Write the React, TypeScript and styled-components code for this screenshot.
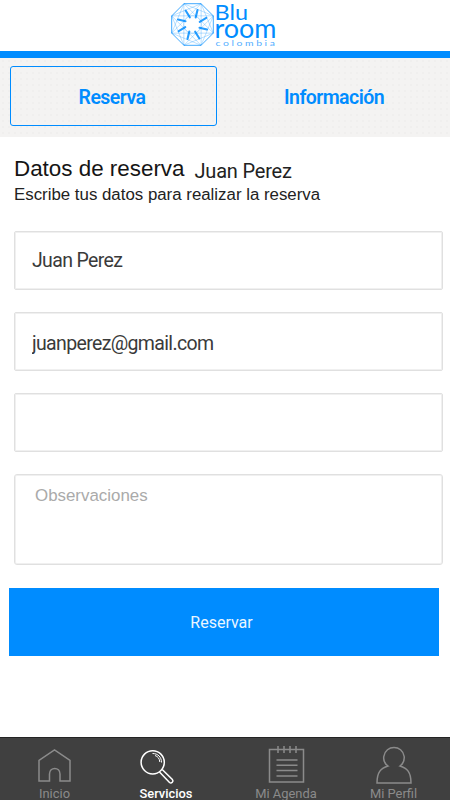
import styled, { createGlobalStyle } from "styled-components";

const BLUE = "#008cff";

const GlobalStyle = createGlobalStyle`
  * {
    box-sizing: border-box;
  }

  body {
    margin: 0;
    background: #fff;
    overflow: hidden;
  }
`;

const Screen = styled.div`
  width: 450px;
  height: 800px;
  display: flex;
  flex-direction: column;
  background: #fff;
  font-family: Roboto, "Liberation Sans", sans-serif;
  overflow: hidden;
`;

const Header = styled.header`
  height: 58px;
  flex-shrink: 0;
  padding-left: 170px;
  border-bottom: 7px solid ${BLUE};

  svg {
    display: block;
  }
`;

const Tabs = styled.nav`
  height: 79px;
  flex-shrink: 0;
  display: flex;
  gap: 15px;
  padding: 8px 10px 11px;
  background-color: #f4f3f2;
  background-image: radial-gradient(#f0efee 0.8px, transparent 1px);
  background-size: 6px 6px;
`;

const Tab = styled.button<{ $isActive?: boolean }>`
  width: 207px;
  flex-shrink: 0;
  padding: 3px 3px 0 0;
  border: 1px solid ${({ $isActive }) => ($isActive ? BLUE : "transparent")};
  border-radius: 3px;
  background: transparent;
  color: ${BLUE};
  font-family: inherit;
  font-size: 19.5px;
  font-weight: 600;
  letter-spacing: -0.55px;
  line-height: 22px;
`;

const Heading = styled.div`
  display: flex;
  flex-direction: column;
  padding: 18px 14px 0;
`;

const TitleRow = styled.div`
  display: flex;
  align-items: flex-end;
  gap: 10px;
  height: 28px;
`;

const Title = styled.h1`
  margin: 0;
  color: #151515;
  font-family: "Liberation Sans", sans-serif;
  font-size: 22.4px;
  font-weight: 400;
  line-height: 28px;
  white-space: nowrap;
`;

const UserName = styled.span`
  color: #222;
  font-size: 20px;
  letter-spacing: -0.2px;
  line-height: 24px;
  white-space: nowrap;
`;

const Subtitle = styled.p`
  margin: 0;
  color: #222;
  font-family: "Liberation Sans", sans-serif;
  font-size: 16.85px;
  line-height: 24px;
  white-space: nowrap;
`;

const Form = styled.form`
  display: flex;
  flex-direction: column;
  gap: 22px;
  padding: 24px 7px 0 14px;
`;

const Field = styled.input<{ $offset?: number }>`
  height: 59px;
  padding: ${({ $offset = 0 }) => $offset}px 17px 0;
  border: 1px solid #e0e0e0;
  border-radius: 2px;
  box-shadow: inset 0 0 0 1px #f0f0f0;
  background: #fff;
  color: #3a3a3a;
  font-family: inherit;
  font-size: 19.5px;
  font-weight: 400;
  letter-spacing: -0.65px;
  outline: none;
`;

const Notes = styled.textarea`
  height: 91px;
  padding: 11px 20px;
  border: 1px solid #e0e0e0;
  border-radius: 3px;
  box-shadow: inset 0 0 0 1px #f0f0f0;
  background: #fff;
  font-family: "Liberation Sans", sans-serif;
  font-size: 16.9px;
  line-height: 20px;
  outline: none;
  resize: none;

  &::placeholder {
    color: #aaa;
    opacity: 1;
  }
`;

const SubmitButton = styled.button`
  width: 430px;
  height: 68px;
  margin: 1px 0 0 -5px;
  padding: 0 5px 0 0;
  border: 0;
  background: ${BLUE};
  color: #eaf6ff;
  font-family: inherit;
  font-size: 16px;
`;

const BottomNav = styled.nav`
  height: 63px;
  flex-shrink: 0;
  display: grid;
  grid-template-columns: 109px 114px 126px 89px;
  margin-top: auto;
  border-top: 1px solid #242424;
  background: #404040;
`;

const NavItem = styled.a<{ $isActive?: boolean }>`
  display: flex;
  flex-direction: column;
  align-items: center;
  color: ${({ $isActive }) => ($isActive ? "#fff" : "#8b8b8b")};
  font-size: 12.9px;
  font-weight: ${({ $isActive }) => ($isActive ? 500 : 400)};
  line-height: 16px;
  white-space: nowrap;

  svg {
    display: block;
    width: 40px;
    height: 48px;
    flex-shrink: 0;
    fill: none;
    stroke: currentColor;
    stroke-width: 1.5;
  }
`;

// the magnifier sits left of its label's centre
const SearchGlyph = styled.svg`
  margin-right: 18px;
`;

const emblemAngles = [0, 45, 90, 135, 180, 225, 270, 315];

function Logo() {
  return (
    <svg width="110" height="50" viewBox="0 0 110 50">
      <g transform="translate(22.5 24.5)" fill="none" stroke={BLUE}>
        <path
          d="M-8.6-20.8H8.6L20.8-8.6V8.6L8.6 20.8H-8.6L-20.8 8.6V-8.6Z"
          strokeWidth="1"
          opacity="0.75"
        />
        {emblemAngles.map((angle) => (
          <g key={angle} transform={`rotate(${angle})`}>
            <path
              d="M-8.6-20.8L20.8-8.6M-8.6-20.8L20.8 8.6"
              strokeWidth="0.7"
              opacity="0.38"
            />
            <path
              d="M5-14.5L3.2-7"
              strokeWidth="2.1"
              opacity="0.85"
              strokeLinecap="round"
            />
          </g>
        ))}
        <circle r="9" strokeWidth="0.6" opacity="0.25" />
      </g>
      <g fill={BLUE} fontFamily="Lato, sans-serif">
        <text x="44.5" y="19.8" fontSize="22" textLength="33.5" lengthAdjust="spacingAndGlyphs">
          Blu
        </text>
        <text x="44.5" y="37.8" fontSize="26" textLength="62" lengthAdjust="spacingAndGlyphs">
          room
        </text>
        <text x="45.5" y="45.7" fontSize="8" letterSpacing="2" textLength="62" lengthAdjust="spacingAndGlyphs" opacity="0.7">
          colombia
        </text>
      </g>
    </svg>
  );
}

function HomeIcon() {
  return (
    <svg viewBox="0 0 40 48">
      <path d="M4 43V22.5L19.5 12 35 22.5V43H25V36C25 28.5 14.5 28.5 14.5 36V43Z" />
    </svg>
  );
}

function SearchIcon() {
  return (
    <SearchGlyph viewBox="0 0 40 48">
      <circle cx="15.7" cy="24.3" r="11.6" />
      <path d="M15.5 15.5C21 15.5 24.5 19 24.5 24.5M18 17.5C21 18.5 22.5 20.5 22.8 24" strokeWidth="1" />
      <path d="M22.5 34L32.5 44.5C34.5 46 37 43.5 35.4 41.5L25.2 31.5" />
    </SearchGlyph>
  );
}

function AgendaIcon() {
  return (
    <svg viewBox="0 0 40 48">
      <path d="M3.5 11.5H37.5V44H3.5Z" />
      <path d="M12 8V15M18 8V15M24 8V15M30 8V15M10.5 22H31.5M10.5 27.3H31.5M10.5 32.6H31.5M10.5 38H31.5" />
    </svg>
  );
}

function ProfileIcon() {
  return (
    <svg viewBox="0 0 40 48">
      <path d="M14 28C9.5 25 9.5 20.5 9.8 18.5 11.5 6.5 28.5 6.5 30.2 18.5 30.5 22 29.5 25.5 26 28 33 30 37 34 37 45H3C3 34 7 30 14 28Z" />
    </svg>
  );
}

export default function App() {
  return (
    <Screen>
      <GlobalStyle />
      <Header>
        <Logo />
      </Header>
      <Tabs>
        <Tab $isActive>Reserva</Tab>
        <Tab>Información</Tab>
      </Tabs>
      <Heading>
        <TitleRow>
          <Title>Datos de reserva</Title>
          <UserName>Juan Perez</UserName>
        </TitleRow>
        <Subtitle>Escribe tus datos para realizar la reserva</Subtitle>
      </Heading>
      <Form>
        <Field defaultValue="Juan Perez" />
        <Field defaultValue="juanperez@gmail.com" $offset={4} />
        <Field />
        <Notes placeholder="Observaciones" />
        <SubmitButton type="button">Reservar</SubmitButton>
      </Form>
      <BottomNav>
        <NavItem>
          <HomeIcon />
          Inicio
        </NavItem>
        <NavItem $isActive>
          <SearchIcon />
          Servicios
        </NavItem>
        <NavItem>
          <AgendaIcon />
          Mi Agenda
        </NavItem>
        <NavItem>
          <ProfileIcon />
          Mi Perfil
        </NavItem>
      </BottomNav>
    </Screen>
  );
}
